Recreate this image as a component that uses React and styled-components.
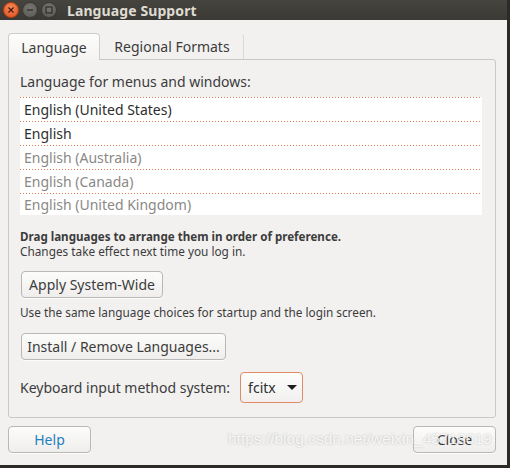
import React from 'react';
import styled, { createGlobalStyle } from 'styled-components';

const GlobalStyle = createGlobalStyle`
  html, body {
    margin: 0;
    padding: 0;
    background: #2b2a27;
    width: 510px;
    height: 468px;
    overflow: hidden;
  }
  * { box-sizing: border-box; }
`;

const Window = styled.div`
  position: relative;
  width: 507px;
  height: 465px;
  background: #f2f1f0;
  display: flex;
  flex-direction: column;
  font-family: "Noto Sans", "DejaVu Sans", sans-serif;
  color: #3c3c3c;
`;

const TitleBar = styled.div`
  height: 20px;
  background: linear-gradient(#45443f, #3a3935);
  display: flex;
  align-items: center;
  padding-left: 3px;
  gap: 3px;
`;

const WinButton = styled.div`
  width: 16px;
  height: 16px;
  border-radius: 50%;
  display: flex;
  align-items: center;
  justify-content: center;
  background: ${p => (p.$close ? 'radial-gradient(circle at 50% 35%, #f58a5b, #df4d1c)' : 'radial-gradient(circle at 50% 35%, #77756f, #5a5853)')};
  border: 1px solid ${p => (p.$close ? '#b8400f' : '#3a3935')};
`;

const Title = styled.div`
  margin-left: 7px;
  font-size: 14px;
  font-weight: 700;
  color: #dfdbd2;
  letter-spacing: 0.1px;
`;

const Body = styled.div`
  flex: 1;
  display: flex;
  flex-direction: column;
  padding: 13px 11px 0 8px;
`;

const Tabs = styled.div`
  display: flex;
  height: 26px;
  align-items: stretch;
`;

const Tab = styled.div`
  width: ${p => p.$w}px;
  display: flex;
  align-items: center;
  justify-content: center;
  font-size: 14px;
  color: #3c3c3c;
  border: 1px solid ${p => (p.$active ? '#cfcdca' : 'transparent')};
  border-bottom: none;
  border-right: 1px solid ${p => (p.$active ? '#cfcdca' : '#dcdad7')};
  border-radius: 4px 4px 0 0;
  background: ${p => (p.$active ? 'linear-gradient(#fdfdfc, #f4f3f2)' : 'transparent')};
  margin-bottom: ${p => (p.$active ? '-1px' : '0')};
  position: relative;
  z-index: 1;
`;

const Frame = styled.div`
  height: 359px;
  border: 1px solid #cac8c5;
  border-radius: 0 3px 3px 3px;
  padding: 13px 13px 0 11px;
  display: flex;
  flex-direction: column;
`;

const Label = styled.div`
  font-size: 14px;
  line-height: 17px;
  color: #3c3c3c;
`;

const List = styled.div`
  margin-top: 7px;
  background: #fff;
  display: flex;
  flex-direction: column;
`;

const Row = styled.div`
  height: 24px;
  display: flex;
  align-items: center;
  padding-left: 4px;
  font-size: 14px;
  color: ${p => (p.$dim ? '#8a8986' : '#2e2e2e')};
  background-image: linear-gradient(to right, #e27a4f 50%, transparent 50%);
  background-size: 3px 1px;
  background-repeat: repeat-x;
  background-position: 0 0;
  &:last-child {
    height: 22px;
  }
`;

const Note = styled.div`
  font-size: ${p => (p.$bold ? '11.6px' : '11.8px')};
  line-height: 15px;
  font-weight: ${p => (p.$bold ? 700 : 400)};
  color: #3c3c3c;
`;

const Notes = styled.div`
  margin-top: ${p => p.$mt || 12}px;
  display: flex;
  flex-direction: column;
`;

const Button = styled.button`
  height: 27px;
  width: ${p => p.$w}px;
  padding: 0;
  border: 1px solid #bab8b4;
  border-radius: 4px;
  background: linear-gradient(#fcfcfb, #efeeec);
  font-family: inherit;
  font-size: 14px;
  color: ${p => p.$color || '#3c3c3c'};
  display: flex;
  align-items: center;
  justify-content: center;
  box-shadow: 0 1px 0 rgba(255, 255, 255, 0.8);
`;

const ButtonRow = styled.div`
  margin-top: ${p => p.$mt}px;
  display: flex;
  padding-left: 1px;
`;

const ComboRow = styled.div`
  margin-top: 12px;
  display: flex;
  align-items: center;
  gap: 10px;
`;

const Combo = styled.div`
  width: 63px;
  height: 31px;
  border: 1px solid #e08a67;
  border-radius: 4px;
  background: linear-gradient(#fdfdfc, #f1f0ee);
  display: flex;
  align-items: center;
  padding-left: 7px;
  gap: 11px;
  font-size: 14px;
  color: #2e2e2e;
`;

const Arrow = styled.span`
  width: 0;
  height: 0;
  border-left: 5px solid transparent;
  border-right: 5px solid transparent;
  border-top: 5px solid #1e1e1e;
`;

const Footer = styled.div`
  margin-top: 8px;
  display: flex;
  justify-content: space-between;
`;

const Watermark = styled.div`
  position: absolute;
  left: 228px;
  top: 430px;
  font-family: "Liberation Sans", Arial, sans-serif;
  font-size: 15.5px;
  color: rgba(255, 255, 255, 0.85);
  text-shadow: 0 0 2px rgba(110, 110, 110, 0.45);
  pointer-events: none;
  white-space: nowrap;
`;

const langs = [
  { name: 'English (United States)' },
  { name: 'English' },
  { name: 'English (Australia)', dim: true },
  { name: 'English (Canada)', dim: true },
  { name: 'English (United Kingdom)', dim: true },
];

const App = () => {
  return (
    <Window>
      <GlobalStyle />
      <TitleBar>
        <WinButton $close>
          <svg width="8" height="8" viewBox="0 0 8 8">
            <path d="M1.5 1.5L6.5 6.5M6.5 1.5L1.5 6.5" stroke="#4a1a08" strokeWidth="1.3" />
          </svg>
        </WinButton>
        <WinButton>
          <svg width="8" height="8" viewBox="0 0 8 8">
            <path d="M1 4H7" stroke="#2e2d2a" strokeWidth="1.3" />
          </svg>
        </WinButton>
        <WinButton>
          <svg width="8" height="8" viewBox="0 0 8 8">
            <rect x="1" y="1" width="6" height="6" fill="none" stroke="#2e2d2a" strokeWidth="1.2" />
          </svg>
        </WinButton>
        <Title>Language Support</Title>
      </TitleBar>
      <Body>
        <Tabs>
          <Tab $active $w={92}>Language</Tab>
          <Tab $w={144}>Regional Formats</Tab>
        </Tabs>
        <Frame>
          <Label>Language for menus and windows:</Label>
          <List>
            {langs.map(l => (
              <Row key={l.name} $dim={l.dim}>{l.name}</Row>
            ))}
          </List>
          <Notes $mt={14}>
            <Note $bold>Drag languages to arrange them in order of preference.</Note>
            <Note>Changes take effect next time you log in.</Note>
          </Notes>
          <ButtonRow $mt={12}>
            <Button $w={142}>Apply System-Wide</Button>
          </ButtonRow>
          <Notes $mt={7}>
            <Note>Use the same language choices for startup and the login screen.</Note>
          </Notes>
          <ButtonRow $mt={13}>
            <Button $w={205}>Install / Remove Languages...</Button>
          </ButtonRow>
          <ComboRow>
            <Label>Keyboard input method system:</Label>
            <Combo>
              fcitx
              <Arrow />
            </Combo>
          </ComboRow>
        </Frame>
        <Footer>
          <Button $w={83} $color="#1f7fc0">Help</Button>
          <Button $w={83}>Close</Button>
        </Footer>
      </Body>
      <Watermark>https://blog.csdn.net/weixin_45718019</Watermark>
    </Window>
  );
};

export default App;
